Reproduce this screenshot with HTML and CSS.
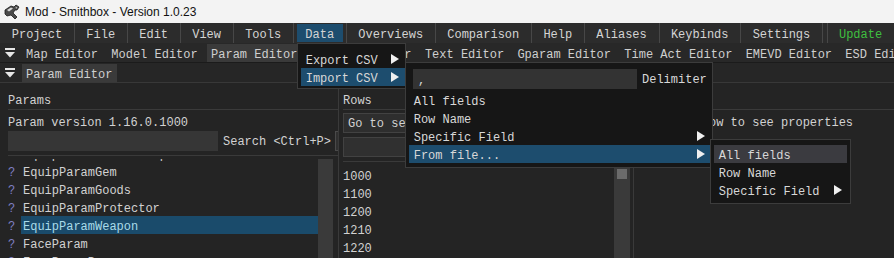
FILE: index.html
```html
<!DOCTYPE html>
<html lang="en">
  <head>
    <meta charset="UTF-8" />
    <meta name="viewport" content="width=device-width, initial-scale=1.0" />
    <title>Mod - Smithbox - Version 1.0.23</title>
    <link rel="stylesheet" href="styles.css">
  </head>
  <body>
    <div class="titlebar">
      <svg class="app-icon" width="18" height="16" viewBox="0 0 18 16">
        <path d="M2 6 L8 2 L11 3 L13 1 L16 3 L14 6 L12 6 L10 9 L14 13 L12 15 L8 11 L4 12 L2 10 Z" fill="#4a4a4a" stroke="#1a1a1a" stroke-width="0.8"/>
        <path d="M4 6 L8 3.5 L10 4.5 L6 7.5 Z" fill="#d8d8d8"/>
        <path d="M12.5 2.5 L14.5 3.5 L13 5 Z" fill="#bbbbbb"/>
      </svg>
      <span>Mod - Smithbox - Version 1.0.23</span>
    </div>

    <div class="menubar">
      <span class="menu-item">Project</span><span class="sep"></span>
      <span class="menu-item">File</span><span class="sep"></span>
      <span class="menu-item">Edit</span><span class="sep"></span>
      <span class="menu-item">View</span><span class="sep"></span>
      <span class="menu-item">Tools</span><span class="sep"></span>
      <span class="menu-item active">Data</span><span class="sep"></span>
      <span class="menu-item">Overviews</span><span class="sep"></span>
      <span class="menu-item">Comparison</span><span class="sep"></span>
      <span class="menu-item">Help</span><span class="sep"></span>
      <span class="menu-item">Aliases</span><span class="sep"></span>
      <span class="menu-item">Keybinds</span><span class="sep"></span>
      <span class="menu-item">Settings</span><span class="sep"></span>
      <span class="menu-gap"></span><span class="sep"></span>
      <span class="menu-item update">Update</span>
    </div>

    <div class="tabrow first">
      <svg class="win-btn" width="10" height="10" viewBox="0 0 10 10"><rect x="0" y="0" width="10" height="2" fill="#e6e6e6"/><polygon points="0,4 10,4 5,9.5" fill="#e6e6e6"/></svg>
      <span class="tab">Map Editor</span>
      <span class="tab">Model Editor</span>
      <span class="tab on">Param Editor</span>
      <span class="tab">Texture Viewer</span>
      <span class="tab">Text Editor</span>
      <span class="tab">Gparam Editor</span>
      <span class="tab">Time Act Editor</span>
      <span class="tab">EMEVD Editor</span>
      <span class="tab">ESD Editor</span>
    </div>
    <div class="tabrow second">
      <svg class="win-btn" width="10" height="10" viewBox="0 0 10 10"><rect x="0" y="0" width="10" height="2" fill="#e6e6e6"/><polygon points="0,4 10,4 5,9.5" fill="#e6e6e6"/></svg>
      <span class="tab on">Param Editor</span>
    </div>

    <div class="workspace">
      <div class="panel params">
        <div class="panel-head">Params</div>
        <div class="version">Param version 1.16.0.1000</div>
        <div class="search-row">
          <span class="field search-field"></span>
          <span class="search-label">Search &lt;Ctrl+P&gt;</span>
          <span class="field clip-btn"></span>
        </div>
        <div class="list-area">
          <div class="list-rows">
            <div class="param-row cut"><span class="q">?</span><span class="name">EquipParamCustomWeapon</span></div>
            <div class="param-row"><span class="q">?</span><span class="name">EquipParamGem</span></div>
            <div class="param-row"><span class="q">?</span><span class="name">EquipParamGoods</span></div>
            <div class="param-row"><span class="q">?</span><span class="name">EquipParamProtector</span></div>
            <div class="param-row"><span class="q">?</span><span class="name selected">EquipParamWeapon</span></div>
            <div class="param-row"><span class="q">?</span><span class="name">FaceParam</span></div>
            <div class="param-row"><span class="q">?</span><span class="name">FaceRangeParam</span></div>
          </div>
          <div class="vscroll"></div>
        </div>
      </div>

      <div class="panel rows">
        <div class="panel-head">Rows</div>
        <div class="field goto">Go to selection</div>
        <div class="field row-filter"></div>
        <div class="list-area">
          <div class="list-rows row-ids">
            <div class="row-id">1000</div>
            <div class="row-id">1100</div>
            <div class="row-id">1200</div>
            <div class="row-id">1210</div>
            <div class="row-id">1220</div>
          </div>
          <div class="vscroll mid"><div class="grab"></div></div>
        </div>
      </div>

      <div class="panel props">
        <div class="panel-head"></div>
        <div class="version">Select a row to see properties</div>
      </div>
    </div>

    <!-- open menus: Data > Import CSV > From file... -->
    <div class="popup data-menu">
      <div class="popup-item"><span>Export CSV</span><svg class="arrow" width="8" height="10" viewBox="0 0 8 10"><polygon points="0,0 8,5 0,10" fill="#f0f0f0"/></svg></div>
      <div class="popup-item hot"><span>Import CSV</span><svg class="arrow" width="8" height="10" viewBox="0 0 8 10"><polygon points="0,0 8,5 0,10" fill="#f0f0f0"/></svg></div>
    </div>

    <div class="popup import-menu">
      <div class="delim-row">
        <span class="field delim-field">,</span>
        <span class="delim-label">Delimiter</span>
      </div>
      <div class="popup-item">All fields</div>
      <div class="popup-item">Row Name</div>
      <div class="popup-item"><span>Specific Field</span><svg class="arrow" width="8" height="10" viewBox="0 0 8 10"><polygon points="0,0 8,5 0,10" fill="#f0f0f0"/></svg></div>
      <div class="popup-item hot"><span>From file...</span><svg class="arrow" width="8" height="10" viewBox="0 0 8 10"><polygon points="0,0 8,5 0,10" fill="#f0f0f0"/></svg></div>
    </div>

    <div class="popup file-menu">
      <div class="popup-item hover">All fields</div>
      <div class="popup-item">Row Name</div>
      <div class="popup-item"><span>Specific Field</span><svg class="arrow" width="8" height="10" viewBox="0 0 8 10"><polygon points="0,0 8,5 0,10" fill="#f0f0f0"/></svg></div>
    </div>
  </body>
</html>
```

FILE: styles.css
```css
/* rows are 18px tall; text uses a 22px line so it sits like the imgui font */
body {
  margin: 0;
  width: 894px;
  height: 258px;
  overflow: hidden;
  position: relative;
  background-color: #232323;
  font-family: "Liberation Mono", "DejaVu Sans Mono", monospace;
  font-size: 12px;
  color: #d2d2d2;
  white-space: nowrap;
}
.titlebar {
  height: 23px;
  background-color: #f3f3f3;
  display: flex;
  align-items: center;
  gap: 4px;
  padding-left: 3px;
  font-family: "Liberation Sans", Arial, sans-serif;
  font-size: 12px;
  color: #111;
}
.menubar {
  height: 20px;
  display: flex;
  align-items: flex-start;
  background-color: #2c2c2c;
}
.menu-item {
  height: 18px;
  margin: 1px 3px;
  padding: 0 8.75px;
  line-height: 22px;
  color: #d4d4d4;
}
.menu-item.active {
  background-color: #1d4d6e;
}
.menu-item.update {
  color: #3fbf3f;
}
.menu-gap {
  width: 6px;
}
.sep {
  width: 1px;
  height: 20px;
  background-color: #474747;
}
.tabrow {
  height: 19px;
  display: flex;
  align-items: flex-start;
  padding-left: 5px;
  background-color: #282828;
  overflow: hidden;
}
.tabrow.first {
  border-bottom: 1px solid #1b1b1b;
}
.tabrow.second {
  background-color: #262626;
  border-bottom: 1px solid #383838;
}
.win-btn {
  align-self: center;
  margin-right: 7px;
  flex-shrink: 0;
}
.tab {
  height: 18px;
  margin-top: 1px;
  margin-right: 4.3px;
  padding: 0 5px 0 4px;
  line-height: 22px;
  color: #cfcfcf;
  flex-shrink: 0;
}
.tab.on {
  background-color: #3a3a3a;
}
.workspace {
  height: 175px;
  display: flex;
}
.panel {
  background-color: #242424;
  overflow: hidden;
  display: flex;
  flex-direction: column;
  box-sizing: border-box;
}
.params {
  width: 339px;
  padding-left: 8px;
  border-right: 1px solid #3a3a3a;
}
.rows {
  width: 295px;
  padding-left: 4px;
  border-right: 1px solid #3a3a3a;
}
.props {
  flex: 1;
  padding-left: 3px;
}
.panel-head {
  height: 18px;
  line-height: 22px;
  padding: 7px 0 1px;
  border-bottom: 1px solid #3a3a3a;
  flex-shrink: 0;
}
.version {
  height: 18px;
  margin-top: 2px;
  line-height: 22px;
  flex-shrink: 0;
}
.field {
  display: block;
  height: 20px;
  box-sizing: border-box;
  background-color: #363636;
  flex-shrink: 0;
}
.search-row {
  display: flex;
  align-items: flex-start;
  height: 20px;
  margin: 1px 0 4px;
  flex-shrink: 0;
}
.search-field {
  width: 210px;
}
.search-label {
  margin-left: 5px;
  line-height: 22px;
  height: 20px;
  flex-shrink: 0;
}
.clip-btn {
  width: 20px;
  margin-left: 4px;
  border: 1px solid #4a4a4a;
  background-color: #303030;
}
.list-area {
  flex: 1;
  min-height: 0;
  display: flex;
  border-top: 1px solid #3a3a3a;
}
.list-rows {
  flex: 1;
  overflow: hidden;
}
.params .list-rows {
  margin-top: 3px;
}
.param-row {
  display: flex;
  height: 18px;
  line-height: 22px;
}
.param-row.cut {
  margin-top: -15px;
}
.q {
  width: 13px;
  color: #7f7fc4;
  flex-shrink: 0;
}
.name {
  flex: 1;
  padding-left: 2px;
}
.name.selected {
  background-color: #1a4b6b;
  color: #a9dbe9;
}
.vscroll {
  width: 15px;
  margin: 3px 5px 0 0;
  background-color: #3a3a3a;
  flex-shrink: 0;
}
.goto {
  margin: 3px 4px 0 0;
  padding-left: 4px;
  line-height: 21px;
  border: 1px solid #424242;
  background-color: #2e2e2e;
}
.row-filter {
  margin: 4px 4px 4px 0;
  border: 1px solid #424242;
  background-color: #303030;
}
.row-ids {
  padding-top: 4px;
}
.row-id {
  height: 18px;
  line-height: 22px;
}
.vscroll.mid {
  width: 16px;
  margin: 6px 3px 0 0;
  padding: 1px 3px;
  box-sizing: border-box;
}
.grab {
  height: 10px;
  background-color: #6b6b6b;
}
.popup {
  position: absolute;
  box-sizing: border-box;
  background-color: #161616;
  border: 1px solid #3c3c3c;
  color: #d8d8d8;
}
.popup-item {
  height: 18px;
  line-height: 22px;
  display: flex;
  align-items: flex-start;
  justify-content: space-between;
  padding-left: 4.7px;
}
.popup-item span {
  height: 18px;
}
.popup-item.hot {
  background-color: #1d4d6e;
}
.popup-item.hover {
  background-color: #3b3b40;
}
.arrow {
  margin: 4px 5px 0 0;
  flex-shrink: 0;
}
.data-menu {
  left: 297px;
  top: 43px;
  width: 109px;
  height: 46px;
  padding: 6px 0 2px 3px;
}
.data-menu .arrow {
  margin-right: 6px;
}
.import-menu {
  left: 405px;
  top: 62px;
  width: 308px;
  height: 106px;
  padding: 6px 2px 4px 3px;
}
.delim-row {
  display: flex;
  align-items: flex-start;
  margin: 0 0 2px 4px;
}
.delim-field {
  width: 224px;
  padding-left: 5px;
  line-height: 24px;
  background-color: #333333;
}
.delim-label {
  margin-left: 5px;
  height: 20px;
  line-height: 23px;
}
.file-menu {
  left: 710px;
  top: 139px;
  width: 141px;
  height: 65px;
  padding: 5px 3px 4px 3px;
}
.file-menu .arrow {
  margin-left: 14px;
}
```
